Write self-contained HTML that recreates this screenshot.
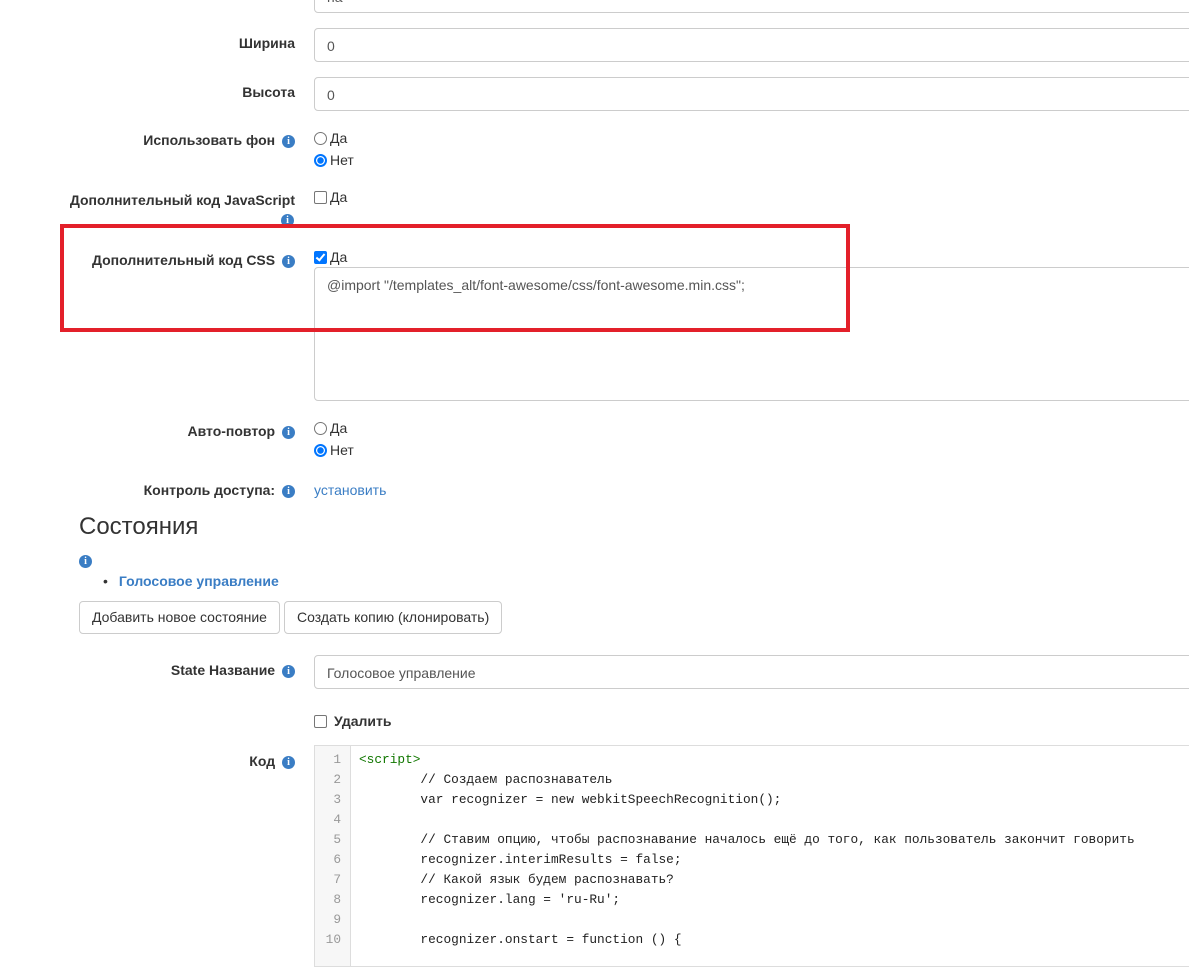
<!DOCTYPE html>
<html><head><meta charset="utf-8"><style>
body{margin:0;width:1189px;height:955px;overflow:hidden;background:#fff;font-family:"Liberation Sans",Arial,sans-serif;font-size:14px;color:#333;position:relative}
.a{position:absolute;white-space:nowrap}
.lbl{position:absolute;right:894px;font-weight:bold;text-align:right;white-space:nowrap}
.i{display:inline-block;width:13px;height:13px;border-radius:50%;background:#3a7dc4;color:#fff;font:bold 10px/13px "Liberation Serif",serif;text-align:center;vertical-align:1px;margin-left:3px}
.inp{position:absolute;left:314px;width:900px;border:1px solid #ccc;border-radius:4px;box-sizing:border-box;padding:0 12px;color:#555;background:#fff}
.rad{display:inline-block;width:13px;height:13px;border:1px solid #767676;border-radius:50%;vertical-align:-2px;margin-right:3px;box-sizing:border-box}
.rad.on{border:2px solid #0075ff;background:radial-gradient(#0075ff 0 3px,#fff 3.5px)}
.cb{display:inline-block;width:13px;height:13px;border:1px solid #767676;border-radius:2px;vertical-align:-2px;margin-right:3px;box-sizing:border-box}
.cb.on{background:#0075ff;border-color:#0075ff;position:relative}
.cb.on:after{content:"";position:absolute;left:3px;top:0px;width:3px;height:7px;border:solid #fff;border-width:0 2px 2px 0;transform:rotate(40deg)}
.btn{position:absolute;top:601px;height:33px;border:1px solid #ccc;border-radius:4px;box-sizing:border-box;line-height:31px;padding:0 12px;background:#fff;white-space:nowrap}
.code{position:absolute;left:314px;top:745px;width:900px;height:220px;border:1px solid #ddd;font-family:"Liberation Mono",monospace;font-size:12.8px;color:#222}
.gut{position:absolute;left:0;top:0;width:35px;height:100%;background:#f7f7f7;border-right:1px solid #ddd}
.ln{position:absolute;height:20px;line-height:20px}
.n{width:26px;text-align:right;color:#999;left:0}
</style></head><body>
<div class="inp" style="top:-20px;height:33px;line-height:33px">на</div>
<div class="lbl" style="top:35px">Ширина</div>
<div class="inp" style="top:28px;height:34px;line-height:34px">0</div>
<div class="lbl" style="top:84px">Высота</div>
<div class="inp" style="top:77px;height:34px;line-height:34px">0</div>

<div class="lbl" style="top:132px">Использовать фон <span class="i">i</span></div>
<div class="a" style="left:314px;top:130px"><span class="rad"></span>Да</div>
<div class="a" style="left:314px;top:152px"><span class="rad on"></span>Нет</div>

<div class="lbl" style="top:192px">Дополнительный код JavaScript</div>
<div class="a" style="left:281px;top:211px"><span class="i" style="margin:0">i</span></div>
<div class="a" style="left:314px;top:189px"><span class="cb"></span>Да</div>

<div class="lbl" style="top:252px">Дополнительный код CSS <span class="i">i</span></div>
<div class="a" style="left:314px;top:249px"><span class="cb on"></span>Да</div>
<div class="inp" style="top:267px;height:134px;padding-top:9px">@import "/templates_alt/font-awesome/css/font-awesome.min.css";</div>
<div class="a" style="left:60px;top:224px;width:782px;height:100px;border:4px solid #e3202a"></div>

<div class="lbl" style="top:423px">Авто-повтор <span class="i">i</span></div>
<div class="a" style="left:314px;top:420px"><span class="rad"></span>Да</div>
<div class="a" style="left:314px;top:442px"><span class="rad on"></span>Нет</div>

<div class="lbl" style="top:482px">Контроль доступа: <span class="i">i</span></div>
<div class="a" style="left:314px;top:482px;color:#3a7dc4">установить</div>

<div class="a" style="left:79px;top:513px;font-size:24px;color:#333">Состояния</div>
<div class="a" style="left:79px;top:552px"><span class="i" style="margin:0">i</span></div>
<div class="a" style="left:103px;top:573px;font-weight:bold;color:#3a7dc4"><span style="color:#333;font-weight:normal;margin-right:11px">•</span>Голосовое управление</div>
<div class="btn" style="left:79px;width:201px">Добавить новое состояние</div>
<div class="btn" style="left:284px;width:218px">Создать копию (клонировать)</div>

<div class="lbl" style="top:662px">State Название <span class="i">i</span></div>
<div class="inp" style="top:655px;height:34px;line-height:34px">Голосовое управление</div>
<div class="a" style="left:314px;top:713px;font-weight:bold"><span class="cb" style="margin-right:7px"></span>Удалить</div>

<div class="lbl" style="top:753px">Код <span class="i">i</span></div>
<div class="code"><div class="gut"></div>
<div class="ln n" style="top:4px">1</div><div class="ln" style="top:4px;left:44px;color:#170">&lt;script&gt;</div>
<div class="ln n" style="top:24px">2</div><div class="ln" style="top:24px;left:44px;white-space:pre">        // Создаем распознаватель</div>
<div class="ln n" style="top:44px">3</div><div class="ln" style="top:44px;left:44px;white-space:pre">        var recognizer = new webkitSpeechRecognition();</div>
<div class="ln n" style="top:64px">4</div>
<div class="ln n" style="top:84px">5</div><div class="ln" style="top:84px;left:44px;white-space:pre">        // Ставим опцию, чтобы распознавание началось ещё до того, как пользователь закончит говорить</div>
<div class="ln n" style="top:104px">6</div><div class="ln" style="top:104px;left:44px;white-space:pre">        recognizer.interimResults = false;</div>
<div class="ln n" style="top:124px">7</div><div class="ln" style="top:124px;left:44px;white-space:pre">        // Какой язык будем распознавать?</div>
<div class="ln n" style="top:144px">8</div><div class="ln" style="top:144px;left:44px;white-space:pre">        recognizer.lang = 'ru-Ru';</div>
<div class="ln n" style="top:164px">9</div>
<div class="ln n" style="top:184px">10</div><div class="ln" style="top:184px;left:44px;white-space:pre">        recognizer.onstart = function () {</div>
</div>
</body></html>
